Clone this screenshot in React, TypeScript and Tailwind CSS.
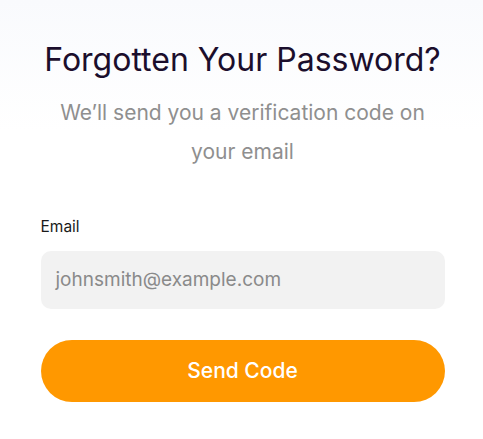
export default function App() {
  return (
    <div
      className="min-h-[439px] w-full bg-[linear-gradient(to_bottom,#f9fafd_0%,#ffffff_30%)] pt-[38px]"
      style={{ fontFamily: "Inter, 'Noto Sans', sans-serif" }}
    >
      <div className="mx-auto flex w-[404px] translate-x-[1px] flex-col">
        <h1 className="text-center text-[32px] leading-[44px] font-normal text-[#1b0e2c]">
          Forgotten Your Password?
        </h1>
        <p className="mx-auto mt-[11px] w-[390px] text-center text-[21px] leading-[39px] text-[#8f8f8f]">
          We’ll send you a verification code on your email
        </p>
        <label className="mt-[46px] text-[15.5px] leading-[20px] text-[#1a1a1a]">Email</label>
        <div className="mt-[14px] flex h-[58px] items-center rounded-[10px] bg-[#f2f2f2] px-[15px]">
          <span className="text-[19px] text-[#8a8a8a]">johnsmith@example.com</span>
        </div>
        <button className="mt-[31px] flex h-[62px] items-center justify-center rounded-full bg-[#ff9800] text-[21px] font-medium text-white">
          Send Code
        </button>
      </div>
    </div>
  );
}
